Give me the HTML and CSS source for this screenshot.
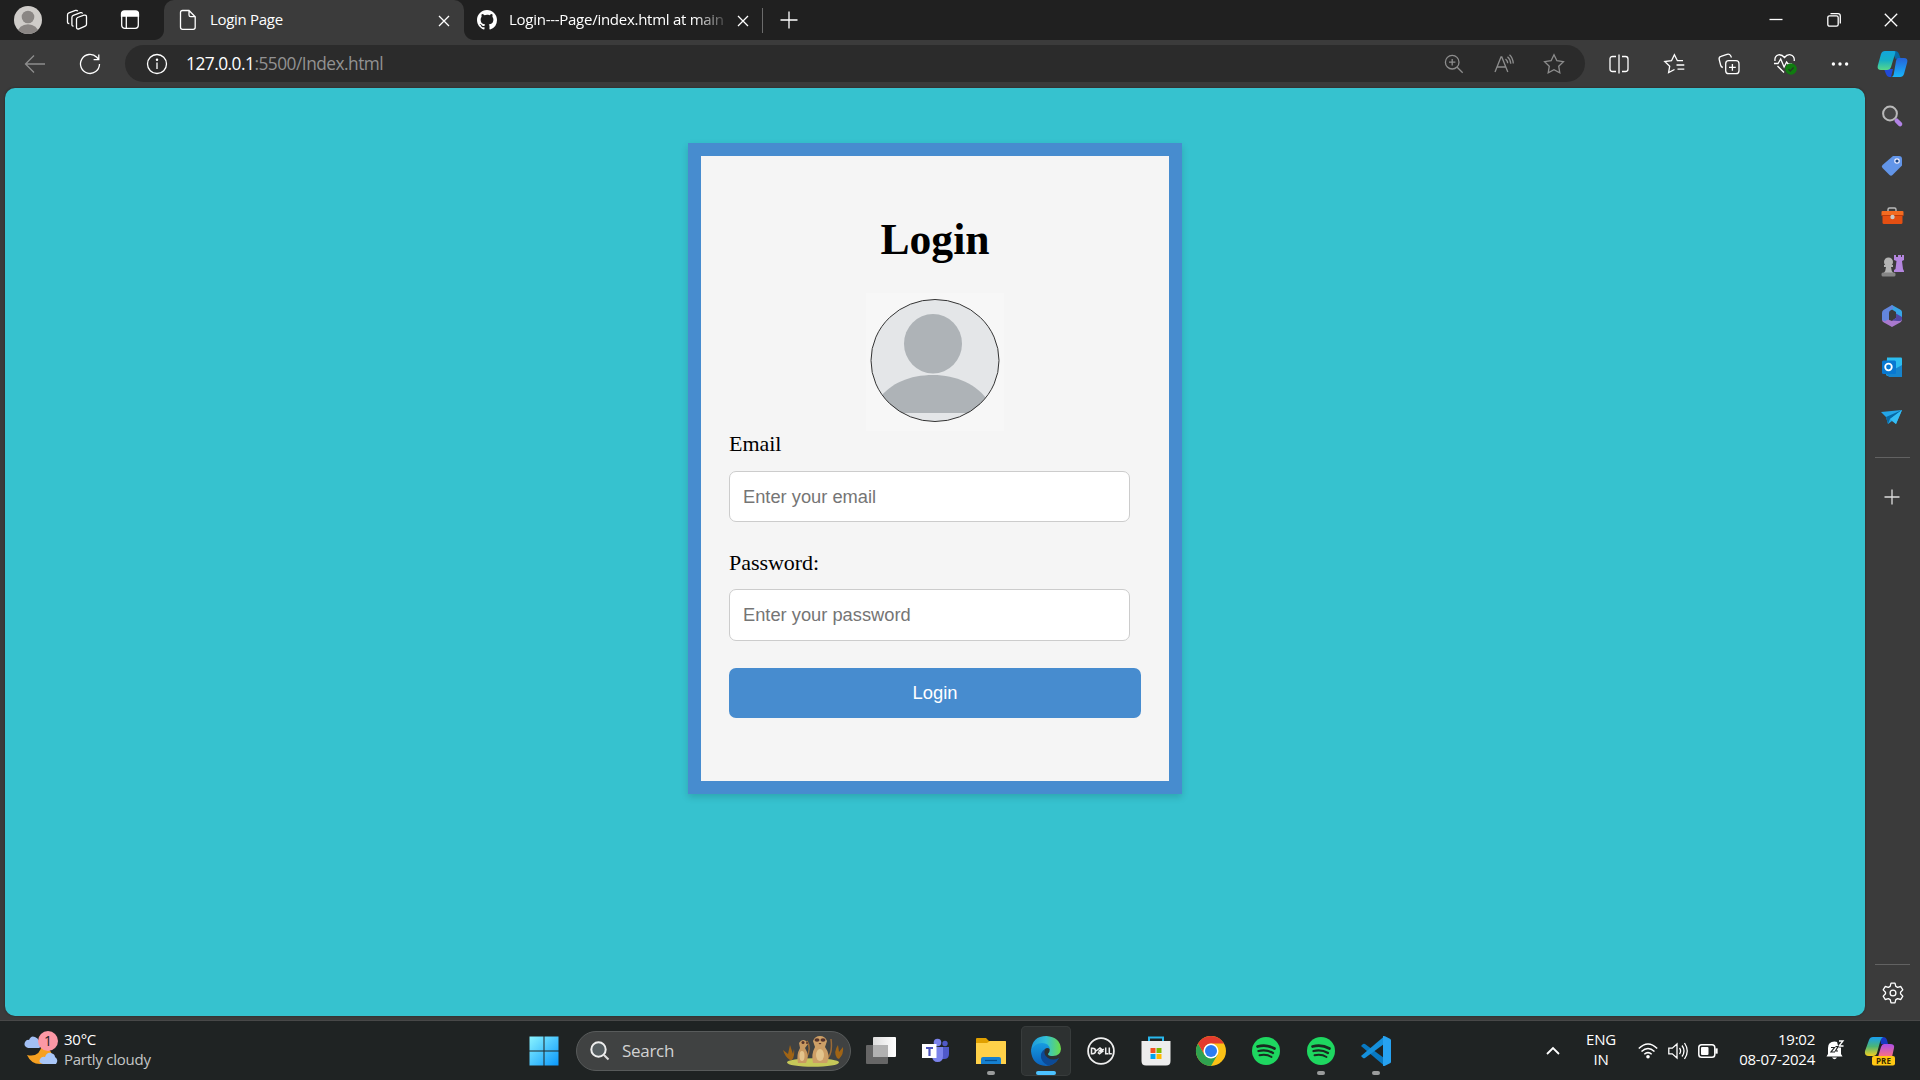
FILE: index.html
```html
<!DOCTYPE html>
<html lang="en">
<head>
<meta charset="utf-8">
<title>Login Page</title>
<link rel="stylesheet" href="styles.css">
</head>
<body>
<header class="titlebar">
  <div class="title-tools">
    <svg width="28" height="28" viewBox="0 0 28 28"><defs><clipPath id="av"><circle cx="14" cy="14" r="14"/></clipPath></defs><g clip-path="url(#av)"><rect width="28" height="28" fill="#cfccc9"/><circle cx="14" cy="11" r="6.3" fill="#8a8684"/><ellipse cx="14" cy="27" rx="10.5" ry="8.8" fill="#8a8684"/></g></svg>
    <svg class="line" width="22" height="22" viewBox="0 0 22 22"><path d="M11.5 8.5 18 6.2q2.500-.5 2.500 1.600v7.400q0 1.400-1.300 1.900l-6.200 2.700q-2.500.8-2.500-1.600V10.500q0-1.500 1-2zM7.500 17q-1.600.4-1.600-1.500V8.500q0-1.700 1.400-2.200L14.500 3.700q1.700-.4 2 1M3.300 14.500q-1.800.2-1.800-1.600V6q0-1.700 1.400-2.200L9.500 1.400q1.700-.4 2.200.9"/></svg>
    <svg class="line" width="20" height="20" viewBox="0 0 20 20"><rect x="1.700" y="1.700" width="16.600" height="16.600" rx="3"/><path d="M1.500 6V4q0-3 3-3h11q3 0 3 3v2z" fill="#fff"/><path d="M6.300 6v12"/></svg>
  </div>
  <div class="tab tab-active">
    <svg class="line" width="18" height="22" viewBox="0 0 18 22"><path d="M3.500 1.500H10L16.200 7.700V18.300q0 2-2 2H3.500q-2 0-2-2V3.500q0-2 2-2zM10 1.500V6q0 1.700 1.700 1.700h4.500"/></svg>
    <span class="tab-title">Login Page</span>
    <svg class="line" width="12" height="12" viewBox="0 0 12 12"><path d="m1 1 10 10M11 1 1 11"/></svg>
  </div>
  <div class="tab">
    <svg width="20" height="20" viewBox="0 0 16 16"><path fill="#fff" d="M8 0C3.580 0 0 3.580 0 8c0 3.540 2.290 6.530 5.470 7.590.4.070.55-.17.55-.38 0-.19-.01-.82-.01-1.490-2.010.37-2.530-.49-2.690-.94-.09-.23-.48-.94-.82-1.130-.28-.15-.68-.52-.01-.53.63-.01 1.080.58 1.230.82.72 1.210 1.870.87 2.330.66.070-.52.28-.87.51-1.070-1.780-.2-3.640-.89-3.640-3.950 0-.87.31-1.590.82-2.150-.08-.2-.36-1.020.08-2.120 0 0 .67-.21 2.200.82A7.600 7.600 0 0 1 8 3.860c.68 0 1.360.09 2 .27 1.530-1.040 2.200-.82 2.200-.82.44 1.100.16 1.920.08 2.120.51.56.82 1.270.82 2.150 0 3.070-1.870 3.750-3.650 3.950.29.25.54.73.54 1.480 0 1.070-.01 1.930-.01 2.200 0 .21.15.46.55.38A8.010 8.010 0 0 0 16 8c0-4.420-3.580-8-8-8z"/></svg>
    <span class="tab-title tab-faded">Login---Page/index.html at main</span>
    <svg class="line" width="12" height="12" viewBox="0 0 12 12"><path d="m1 1 10 10M11 1 1 11"/></svg>
  </div>
  <div class="tab-separator"></div>
  <svg class="line new-tab" width="18" height="18" viewBox="0 0 18 18"><path d="M9 .5v17M.5 9h17"/></svg>
  <div class="window-buttons">
    <svg class="line" width="14" height="14" viewBox="0 0 14 14"><path d="M.5 6.500h13"/></svg>
    <svg class="line" width="14" height="14" viewBox="0 0 14 14"><rect x=".8" y="2.800" width="10.400" height="10.400" rx="1.800"/><path d="M3.500.7H11q2.300 0 2.300 2.300v7.500"/></svg>
    <svg class="line" width="14" height="14" viewBox="0 0 14 14"><path d="m.8.8 12.400 12.400M13.200.8.8 13.200"/></svg>
  </div>
</header>

<div class="toolbar">
  <div class="nav-buttons">
    <svg class="line muted" width="22" height="20" viewBox="0 0 22 20"><path d="M21 10H1.500M10 1.500 1.500 10l8.500 8.500"/></svg>
    <svg class="line" width="22" height="22" viewBox="0 0 22 22"><path d="M20.500 11A9.500 9.500 0 1 1 17.800 4.300L19.700 6.500M19.800 1.500v5.200h-5.200"/></svg>
  </div>
  <div class="address">
    <svg class="line" width="22" height="22" viewBox="0 0 22 22"><circle cx="11" cy="11" r="9.500"/><path d="M11 9.500V16"/><circle cx="11" cy="6.700" r=".6" fill="#fff"/></svg>
    <span class="url"><b>127.0.0.1</b>:5500/Index.html</span>
    <div class="address-actions">
      <svg class="line muted" width="20" height="20" viewBox="0 0 20 20"><circle cx="8.200" cy="8.200" r="6.800"/><path d="m13.200 13.200 5.500 5.500M8.200 5v6.400M5 8.200h6.400"/></svg>
      <svg class="line muted" width="20" height="20" viewBox="0 0 20 20"><path d="m1 18 6-15h.8l6 15M3 13h8.800M11.500 5q2 1.600 2.200 4.300M13.500 2.800q3 2.600 3.300 7M15.500.8q3.300 3 3.800 8.700"/></svg>
      <svg class="line muted" width="22" height="22" viewBox="0 0 22 22"><path d="m11 1.700 2.900 6 6.500.9-4.700 4.600 1.100 6.600L11 16.700l-5.800 3.100 1.100-6.600L1.600 8.600l6.500-.9z"/></svg>
    </div>
  </div>
  <div class="browser-actions">
    <svg class="line" width="20" height="20" viewBox="0 0 20 20"><path d="M7 2.500H3.500q-2.500 0-2.500 2.500v10q0 2.500 2.500 2.500H7M13 2.500h3.500q2.500 0 2.500 2.500v10q0 2.500-2.500 2.500H13M10 .5v19"/></svg>
    <svg class="line" width="22" height="22" viewBox="0 0 22 22"><path d="M20 7.700h-5.600l-3-6-2.900 6L1.800 8.500l4.900 4.700-1.100 6.400 5.900-3.100M13.500 12h7.800M14.500 16.200h6.800"/></svg>
    <svg class="line" width="22" height="22" viewBox="0 0 22 22"><rect x="7.700" y="7.700" width="13.300" height="13" rx="3"/><path d="M14.400 11v6.800M11 14.400h6.800M4.800 14.500Q3 14 2.600 12L1.200 6.500q-.6-2.500 1.800-3.200L9 1.300q2.500-.7 3.500 1.200l1 2"/></svg>
    <svg class="line heart" width="24" height="22" viewBox="0 0 24 22"><path d="M2 8Q1.300 3 5.500 1.800 9 1.300 11.500 4.500 14 1.200 17.500 1.800q4.400 1.200 3.700 6.200M4.500 13l6.500 6.500M1 10.500h4L7.700 6l3.400 8 2.500-5 1.500 2h4"/><circle cx="18" cy="16" r="5.800" fill="#107c10" stroke="none"/><path d="m15.500 16.300 1.800 1.700 3.300-3.500" stroke="#253b25"/></svg>
    <svg width="18" height="6" viewBox="0 0 18 6"><g fill="#fff"><circle cx="2.400" cy="3" r="1.700"/><circle cx="9" cy="3" r="1.700"/><circle cx="15.600" cy="3" r="1.700"/></g></svg>
    <svg width="31" height="28" viewBox="0 0 31 28"><defs><linearGradient id="cp1" x1="0" y1="0" x2="0" y2="1"><stop offset="0" stop-color="#12a5dd"/><stop offset=".5" stop-color="#17afc4"/><stop offset="1" stop-color="#58d889"/></linearGradient><linearGradient id="cp2" x1="0" y1="0" x2="0" y2="1"><stop offset="0" stop-color="#2563d9"/><stop offset="1" stop-color="#18b5fa"/></linearGradient></defs><path d="M15 1h3q3 0 4 3l1.500 4-5 1z" fill="#0869a5"/><path d="M7 19h9l-2 8h-2q-2 0-3-3z" fill="#214ad8"/><path d="M8 1h9q2 0 1.300 2L14 17q-1 3-4 3H4q-4 0-3.300-4L4 4q1-3 4-3z" fill="url(#cp1)"/><path d="M21 8h6q4 0 3.300 4L27 24q-1 3-4 3h-9q2 0 2.600-2L19 11q.5-3 2-3z" fill="url(#cp2)"/></svg>
  </div>
</div>

<div class="workspace">
  <main class="page">
    <form class="card">
      <h1 class="card-title">Login</h1>
      <svg class="portrait" width="138" height="138" viewBox="0 0 138 138"><defs><clipPath id="pt"><ellipse cx="69" cy="67.500" rx="64" ry="61"/></clipPath></defs><rect width="138" height="138" fill="#f7f7f7"/><g clip-path="url(#pt)"><rect width="138" height="138" fill="#e4e6e8"/><ellipse cx="67" cy="50.700" rx="29" ry="29.800" fill="#aeb3b7"/><path d="M12 120V107C24 90 44 82 67 82s44 9 56 27v11z" fill="#aeb3b7"/></g><ellipse cx="69" cy="67.500" rx="64" ry="61" fill="none" stroke="#333"/></svg>
      <label class="field-label" for="email">Email</label>
      <input class="field" id="email" type="email" placeholder="Enter your email">
      <label class="field-label field-label-next" for="password">Password:</label>
      <input class="field field-password" id="password" type="password" placeholder="Enter your password">
      <button class="submit" type="button">Login</button>
    </form>
  </main>
  <aside class="sidebar">
    <svg width="22" height="22" viewBox="0 0 22 22"><circle cx="9" cy="8.500" r="6.900" fill="#454545" stroke="#b9b9b9" stroke-width="2"/><path d="m15.700 15.700 3.400 3.400" stroke="#b283e6" stroke-width="4.400" stroke-linecap="round"/></svg>
    <svg width="22" height="22" viewBox="0 0 22 22"><path d="M12 1h6q3 0 3 3v6.500L11.500 20q-1.500 1.500-3 0l-7-7q-1.500-1.500 0-3z" fill="#6295e8"/><circle cx="16" cy="6" r="2.200" fill="#174586" stroke="#eef" stroke-width="1.200"/></svg>
    <svg width="24" height="22" viewBox="0 0 24 22"><path d="M8 7V4.500Q8 3 9.500 3h5Q16 3 16 4.500V7" fill="none" stroke="#bbb" stroke-width="1.400"/><path d="M2.500 9h20v8.500q0 1.500-1.500 1.500H4q-1.500 0-1.500-1.500z" fill="#e44f12"/><path d="M2.500 6h20q1 0 1 1v3.500h-22V7q0-1 1-1z" fill="#f36b21"/><path d="M1.500 10.500h22" stroke="#bd3b09"/><circle cx="12.500" cy="12" r="2.200" fill="#c8cac9"/></svg>
    <svg width="24" height="24" viewBox="0 0 24 24"><path d="M14 1h2v2h2V1h3v2h1V1h2v5l-2 1 1 8 1 2v1H14v-2l1.500-1 1-8-2.500-1z" fill="#b486df"/><g fill="#b3b3b3"><circle cx="8.500" cy="8" r="4.500"/><path d="M4 11h9v2h-2q0 4 3 7H3q3-3 3-7H4z"/></g><rect x="1.500" y="18.500" width="14" height="4" rx="1.500" fill="#858585"/></svg>
    <svg width="22" height="24" viewBox="0 0 22 24"><path d="m11 1 8.500 4.800Q21 6.500 21 8v7l-6-4.500V8L11 5.500 6 8z" fill="#37a5e7"/><path d="M11 1 2.500 6Q1 7 1 9v7l3 2.500 4-2.500V9q0-2 2-3.200L13 4z" fill="#6386dd"/><path d="M1 16q0 1.500 1.500 2.300L11 23l8.500-4.800Q21 17.200 21 15l-6-1-4 3-4-1.500-3 1.800z" fill="#a979ce"/><path d="m15 9.500 6 3.500v2.500q-1 2-4 1.500l-6-.5 4-2.500z" fill="#5146a0"/></svg>
    <svg width="22" height="22" viewBox="0 0 22 22"><path d="M6 1.500h14q1 0 1 1V20H7q-2 0-2-2z" fill="#2bbdf0"/><path d="M21 9v12H8l-3-3z" fill="#1684cd"/><rect x="1" y="4.500" width="14" height="13.500" rx="1.500" fill="#0878d1"/><circle cx="7.500" cy="11" r="3.300" fill="none" stroke="#fff" stroke-width="1.800"/></svg>
    <svg width="22" height="20" viewBox="0 0 22 20"><path d="M0 5 21 3l-6 14-4-3-4 3-2-7z" fill="#23a6e8"/><path d="m5 10 16-7L9 12l-2 5z" fill="#0868a3"/><path d="m9 12 12-9-6 14z" fill="#35bdf4"/></svg>
    <hr class="side-rule">
    <svg class="line side-add" width="16" height="16" viewBox="0 0 16 16"><path d="M8 .5v15M.5 8h15"/></svg>
    <div class="side-bottom">
      <hr class="side-rule">
      <svg class="line side-gear" width="22" height="22" viewBox="0 0 22 22"><path d="M9 1.200h4l.8 3.200 1.800 1 3.200-.9 2 3.400-2.300 2.300v1.600l2.300 2.300-2 3.400-3.200-.9-1.800 1-.8 3.200H9l-.8-3.200-1.800-1-3.200.9-2-3.400 2.300-2.300v-1.600L1.200 7.900l2-3.400 3.200.9 1.800-1z" stroke-linejoin="round"/><circle cx="11" cy="11" r="2.900"/></svg>
    </div>
  </aside>
</div>

<footer class="taskbar">
  <div class="weather">
    <svg width="36" height="40" viewBox="0 0 36 40"><path d="M19 15q9 5 10 11-1 9-12 9Q8 35 4 26q13 3 15-11z" fill="#f6a020"/><path d="M20 35q-5-1-3-5 2-3 5-2 2-5 6-4 4 1 4 4 4 3 1 7z" fill="#a9c7f8"/><path d="M5 19q-5-2-3-6 2-3 4-2 2-5 6-3 3 1 4 4 5 5 0 7z" fill="#a2bff4"/><circle cx="25" cy="12" r="10" fill="#fc98a5"/><text x="25" y="17" text-anchor="middle" class="badge-text">1</text></svg>
    <div class="two-lines"><span>30°C</span><span class="dim">Partly cloudy</span></div>
  </div>
  <svg class="start" width="30" height="30" viewBox="0 0 30 30"><defs><linearGradient id="win" gradientUnits="userSpaceOnUse" x1="0" y1="0" x2="30" y2="30"><stop stop-color="#8cf5ff"/><stop offset="1" stop-color="#0896fb"/></linearGradient></defs><path d="M.5.500h14v14H.5zM15.500.500h14v14h-14zM.5 15.500h14v14H.5zM15.500 15.500h14v14h-14z" fill="url(#win)"/></svg>
  <div class="search">
    <svg width="20" height="20" viewBox="0 0 20 20"><circle cx="8.500" cy="8.500" r="7.200" fill="#555d60" stroke="#eee" stroke-width="2"/><path d="m13.700 13.700 4.800 4.800" stroke="#ddd" stroke-width="2"/></svg>
    <span class="search-text">Search</span>
    <svg width="62" height="34" viewBox="0 0 62 34"><ellipse cx="31" cy="28.500" rx="26" ry="4.300" fill="#c6c859"/><path d="M8 26Q3 23 1 16l5 4 2-9 3 9 1-5q1 7-2 11zM55 24q-4-6 1-13l1 7 4-5q1 7-4 12z" fill="#a06415"/><path d="M24 24q6-9 1-17M44 25q7-4 5-20" fill="none" stroke="#9a6b38" stroke-width="1.500"/><path d="M16 29q-2-8 2-15l-1-5q3-5 7-2l2 3-3 4q5 8 1 15z" fill="#c99a61"/><path d="M31 29q-2-9 2-16l-2-6q2-5 7-5t7 5l-2 6q6 8 2 16z" fill="#cd9f66"/><ellipse cx="38" cy="21" rx="4" ry="6" fill="#e3c48c"/><ellipse cx="20" cy="22" rx="2.500" ry="5" fill="#e3c48c"/><g fill="#57342b"><ellipse cx="35" cy="6" rx="2.500" ry="1.700"/><ellipse cx="41" cy="6" rx="2.500" ry="1.700"/><circle cx="21" cy="8.500" r="1.500"/><circle cx="25" cy="9" r="1"/><path d="m36.500 9 3 0-1.500 1.500z"/></g></svg>
  </div>
  <nav class="apps">
    <div class="app"><svg width="30" height="30" viewBox="0 0 30 30"><defs><linearGradient id="tv"><stop stop-color="#ddd"/><stop offset="1" stop-color="#fff"/></linearGradient></defs><rect y="9" width="22" height="19" rx="1" fill="#666"/><rect x="7" y="1" width="23" height="20" rx="1" fill="url(#tv)"/><path d="M7 9h15v12H7z" fill="#b1b1b1"/></svg></div>
    <div class="app"><svg width="28" height="26" viewBox="0 0 28 26"><circle cx="15.500" cy="4.500" r="3.800" fill="#7b83eb"/><circle cx="23" cy="5.500" r="2.700" fill="#5059c9"/><path d="M16 9h11v7q0 5-5 5h-5z" fill="#5059c9"/><path d="M10 9h11v9q0 6-5.500 6-5 0-5.500-6z" fill="#7b83eb"/><path d="M0 6h14.500v14H0z" fill="#fff"/><path d="M4 9h7v2H8.600v7H6.400v-7H4z" fill="#4b53bc"/></svg></div>
    <div class="app running"><svg width="30" height="28" viewBox="0 0 30 28"><path d="M0 2q0-1 1-1h9l3 3h16q1 0 1 1v5H0z" fill="#e0a000"/><path d="M0 6h11l3-2h15q1 0 1 1v22H0z" fill="#ffd149"/><path d="M5 27v-5q0-2 2-2h16q2 0 2 2v5z" fill="#1680d0"/><path d="M9 23.500h12" stroke="#064d8b" stroke-width="1.200"/></svg></div>
    <div class="app active"><svg width="30" height="30" viewBox="0 0 30 30"><defs><linearGradient id="ed"><stop stop-color="#1d98dc"/><stop offset=".5" stop-color="#32c0d8"/><stop offset="1" stop-color="#6cdd45"/></linearGradient><linearGradient id="ed2" x1="0" y1="0" x2="0" y2="1"><stop stop-color="#169be0"/><stop offset="1" stop-color="#0b62bd"/></linearGradient></defs><path d="M0 15Q1 0 15.500 0 29 1 30 13q-.5 7-8 7-5 0-5-2 4-5-1-8Q9 7 0 15z" fill="url(#ed)"/><path d="M0 15Q3 7 11 7q7 0 8 6-3-2-5 0-5 6 2 12 6 3 12-3-5 8-13 8Q1 29 0 15z" fill="url(#ed2)"/><path d="M14 13q-5 3-4 9 2 6 8 7.500 6-1 10-7.500-6 3-11 0t-3-9z" fill="#0c4a96"/></svg></div>
    <div class="app"><svg width="28" height="28" viewBox="0 0 28 28"><circle cx="14" cy="14" r="12.900" fill="none" stroke="#eee" stroke-width="1.800"/><g fill="none" stroke="#eee" stroke-width="1.500"><path d="M4.500 11.300h1q3 0 3 2.700t-3 2.700h-1zM18.700 10.500v6.200h2.500M22.300 10.500v6.200h2.500M9 14l4-3 1.500 1.200-3 2.300M10.800 15.300l1.700 1.400 4-3M13 15l3.800-3"/></g></svg></div>
    <div class="app"><svg width="30" height="30" viewBox="0 0 30 30"><path d="M8 6V1.500h14V6" fill="none" stroke="#28b8ed" stroke-width="2"/><path d="M.5 5h29v20q0 4.500-4.500 4.500H5Q.5 29.500.5 25z" fill="#ededed"/><path d="M9.500 12h5v5h-5z" fill="#f25022"/><path d="M15.500 12h5v5h-5z" fill="#7fba00"/><path d="M9.500 18h5v5h-5z" fill="#00a4ef"/><path d="M15.500 18h5v5h-5z" fill="#ffb900"/></svg></div>
    <div class="app"><svg width="30" height="30" viewBox="0 0 30 30"><circle cx="15" cy="15" r="15" fill="#fbc116"/><path d="M15 15 8.500 18.700 2 7.500A15 15 0 0 0 15 30l6.500-11.200z" fill="#2fa24f"/><path d="M2 7.500A15 15 0 0 1 28 7.500H15a7.500 7.500 0 0 0-6.500 11.200z" fill="#e33b2e"/><circle cx="15" cy="15" r="7.500" fill="#fff"/><circle cx="15" cy="15" r="6" fill="#2c7cf0"/></svg></div>
    <div class="app"><svg width="28" height="28" viewBox="0 0 28 28"><circle cx="14" cy="14" r="14" fill="#1ed760"/><g fill="none" stroke="#192a20" stroke-linecap="round"><path d="M5.500 9.500q9-2.500 17 2" stroke-width="2.700"/><path d="M6.500 14q8-2 14.500 2" stroke-width="2.300"/><path d="M7.500 18.300q7-1.500 12 1.700" stroke-width="1.900"/></g></svg></div>
    <div class="app running"><svg width="28" height="28" viewBox="0 0 28 28"><circle cx="14" cy="14" r="14" fill="#1ed760"/><g fill="none" stroke="#192a20" stroke-linecap="round"><path d="M5.500 9.500q9-2.500 17 2" stroke-width="2.700"/><path d="M6.500 14q8-2 14.500 2" stroke-width="2.300"/><path d="M7.500 18.300q7-1.500 12 1.700" stroke-width="1.900"/></g></svg></div>
    <div class="app running"><svg width="30" height="30" viewBox="0 0 30 30"><path d="m0 10 2-2q1-.7 2 0l19 14v7.500z" fill="#0879c2"/><path d="m0 20 2 2q1 .7 2 0L23 8V.5z" fill="#1590dc"/><path d="M22 0q1-.3 2 .3l5 2.500q1 .5 1 1.500v21.400q0 1-1 1.500l-5 2.500q-1 .5-2 0z" fill="#27a2f1"/></svg></div>
  </nav>
  <div class="tray">
    <svg class="line chevron" width="14" height="8" viewBox="0 0 14 8"><path d="m1 7 6-6 6 6" stroke-width="1.800"/></svg>
    <div class="two-lines language"><span>ENG</span><span>IN</span></div>
    <svg class="line" width="20" height="16" viewBox="0 0 20 16"><path d="M.8 5.500q9.200-9 18.400 0M3.500 8.500q6.500-6 13 0M6.300 11.300q3.700-3.300 7.400 0" stroke-width="1.500"/><circle cx="10" cy="13.700" r="1.800" fill="#fff" stroke="none"/></svg>
    <svg class="line" width="20" height="18" viewBox="0 0 20 18"><path d="M.8 6.200h3.500L9 2v14l-4.700-4.200H.8zM11.500 6q2.200 3 0 6M14 3.500q4 5.500 0 11M16.500 1q5.500 8 0 16"/></svg>
    <svg class="line" width="20" height="14" viewBox="0 0 20 14"><rect x=".8" y=".8" width="16" height="12.400" rx="2.800" stroke-width="1.500"/><rect x="3" y="3" width="7.500" height="8" rx="1" fill="#fff" stroke="none"/><path d="M18 5h1v4h-1z" fill="#fff"/></svg>
    <div class="two-lines clock"><span>19:02</span><span>08-07-2024</span></div>
    <svg class="bell" width="18" height="20" viewBox="0 0 18 20"><path d="M2 14V8q0-6.500 6.500-6.500T15 8v6l1.500 2.500H.5zM6 17.500h5q-2.500 3.500-5 0" fill="#fff"/><path d="M10.500 0H18v7.500h-5.500z" fill="#202424"/><path d="M13 1h4l-4 5h4.500" fill="none" stroke="#fff" stroke-width="1.300"/><path d="M5 7.500h3.500L5 12h4M9.500 6.500H12L9.500 11H12" fill="none" stroke="#202424" stroke-width="1.200"/></svg>
    <svg class="assistant" width="30" height="30" viewBox="0 0 30 30"><defs><linearGradient id="pa" x1="0" y1="0" x2="0" y2="1"><stop stop-color="#179ff1"/><stop offset=".5" stop-color="#4cb575"/><stop offset="1" stop-color="#f5cf20"/></linearGradient><linearGradient id="pb" x1="0" y1="0" x2="0" y2="1"><stop stop-color="#ac4ee8"/><stop offset="1" stop-color="#ff737c"/></linearGradient></defs><path d="M15 1h3q3 0 4 3l1 4h-7z" fill="#1838c1"/><path d="M8 1h10q-2 1-3 5l-3 11q-1 3-4 3H4q-5 0-4-5L4 4q1-3 4-3z" fill="url(#pa)"/><path d="M19 8h6q5 0 4 4l-2 9H13l3-10q1-3 3-3z" fill="url(#pb)"/><rect x="7" y="20" width="23" height="9.500" rx="2" fill="#ffc814"/><text x="18.500" y="27.700" text-anchor="middle" class="pre-text">PRE</text></svg>
  </div>
</footer>
</body>
</html>
```
FILE: styles.css
```css
* { box-sizing: border-box; }

body {
  margin: 0;
  width: 1920px;
  height: 1080px;
  overflow: hidden;
  display: flex;
  flex-direction: column;
  background: #3b3b3b;
  color: #fff;
  font: 15px/20px "Open Sans", "Noto Sans", sans-serif;
}

svg { display: block; flex: none; overflow: visible; }
.line { fill: none; stroke: #fff; stroke-width: 1.3; }
.muted { stroke: #8d8d8d; }

/* Window title bar */
.titlebar { display: flex; align-items: center; height: 40px; background: #202020; }
.title-tools { display: flex; align-items: center; gap: 24px; width: 164px; padding-left: 14px; }
.title-tools svg:nth-child(3) { margin-left: 8px; }
.tab { display: flex; align-items: center; width: 297px; height: 40px; padding: 0 12px 0 13px; }
.tab > .line:last-child { margin: 1px 0 0 auto; }
.tab-active { position: relative; width: 300px; padding: 0 14px 0 15px; background: #3b3b3b; border-radius: 10px 10px 0 0; }
.tab-active::before,
.tab-active::after { content: ""; position: absolute; bottom: 0; width: 10px; height: 10px; }
.tab-active::before { left: -10px; background: radial-gradient(circle at 0 0, #202020 9.5px, #3b3b3b 10.5px); }
.tab-active::after { right: -10px; background: radial-gradient(circle at 100% 0, #202020 9.5px, #3b3b3b 10.5px); }
.tab-title { margin-left: 12px; padding-bottom: 2px; font-size: 15px; letter-spacing: -.3px; white-space: nowrap; }
.tab-active .tab-title { margin-left: 13px; }
.tab-faded { width: 216px; overflow: hidden; letter-spacing: -.27px; -webkit-mask-image: linear-gradient(90deg, #000 185px, transparent 222px); mask-image: linear-gradient(90deg, #000 185px, transparent 222px); }
.tab-separator { width: 1px; height: 25px; margin-left: 1px; background: #6b6b6b; }
.new-tab { margin-left: 17px; }
.window-buttons { display: grid; grid-template-columns: repeat(3, 57.5px); justify-items: center; margin-left: auto; }

/* Address bar row */
.toolbar { display: flex; align-items: flex-start; height: 48px; padding-top: 5px; }
.nav-buttons { display: flex; align-items: center; gap: 33px; width: 125px; height: 37px; padding-left: 24px; }
.address { display: flex; align-items: center; width: 1460px; height: 37px; padding: 0 6px 0 21px; border-radius: 19px; background: #2b2b2b; }
.url { margin: 0 auto 0 18px; color: #929292; font-size: 17.3px; letter-spacing: -.5px; }
.url b { color: #fff; font-weight: 400; }
.address-actions { display: grid; grid-template-columns: repeat(3, 50px); place-items: center; }
.browser-actions { display: grid; grid-template-columns: repeat(5, 55.3px) 50px; place-items: center; height: 37px; margin-left: 6px; }

/* Page and browser sidebar */
.workspace { display: flex; height: 933px; padding: 0 0 4px 5px; border-bottom: 1px solid #484848; }
.page { width: 1860px; height: 928px; padding: 55px 0 0 683px; border-radius: 10px; background: #36c2cf; box-shadow: 0 0 2px #222; }
.sidebar { display: grid; grid-template-rows: repeat(7, 50.1px) 31px 48px 1fr; place-items: center; width: 54px; padding-top: 3px; }
.side-rule { width: 35px; height: 1px; margin: 0; border: 0; background: #626262; }
.side-add { stroke: #ddd; }
.side-bottom { align-self: end; height: 52px; }
.side-gear { margin: 17px 0 0 7px; }

.card { display: flex; flex-direction: column; width: 494px; height: 651px; padding: 58px 28px 0; border: 13px solid #478ccf; background: #f5f5f5; box-shadow: 0 3px 7px rgba(0, 0, 0, .15); color: #000; font: 22px/26px "Liberation Serif", serif; }
.card-title { margin: 0 0 29px; font-size: 43.6px; line-height: 50px; text-align: center; }
.portrait { align-self: center; }
.field-label { height: 26px; line-height: 25px; letter-spacing: -.05px; }
.field-label-next { margin-top: 28px; }
.field { width: 401px; height: 51px; margin-top: 14px; padding: 0 13px; border: 1px solid #ccc; border-radius: 7px; background: #fff; font: 18.3px "Liberation Sans", sans-serif; }
.field::placeholder { color: #757575; }
.field-password { height: 52px; margin-top: 13px; }
.submit { height: 50px; margin-top: 27px; padding: 0; border: 0; border-radius: 7px; background: #478ccf; color: #fff; font: 18.4px "Liberation Sans", sans-serif; }

/* Taskbar */
.taskbar { display: flex; align-items: center; height: 59px; background: #1f2323; }
.weather { display: flex; align-items: center; width: 529px; padding-left: 23px; gap: 5px; }
.weather svg { margin-top: -3px; }
.two-lines { display: flex; flex-direction: column; padding-bottom: 4px; font-size: 15px; line-height: 20px; letter-spacing: -.25px; }
.dim { color: #c4c6c6; }
.badge-text { font: 14px "Open Sans", sans-serif; fill: #222; }
.search { display: flex; align-items: center; width: 275px; height: 40px; margin-left: 17px; padding: 0 6px 0 13px; border: 1px solid #585b5b; border-radius: 20px; background: #404242; }
.search-text { margin: 0 auto 0 12px; color: #d2d2d2; font-size: 17px; letter-spacing: -.3px; }
.apps { display: grid; grid-template-columns: repeat(10, 50px); gap: 5px; margin-left: 5px; }
.app { display: grid; place-items: center; position: relative; height: 50px; border-radius: 5px; }
.active { background: #2d3131; box-shadow: inset 0 0 0 1px #383c3c; }
.running::after,
.active::after { content: ""; position: absolute; bottom: 1px; left: 21px; width: 8px; height: 4px; border-radius: 2px; background: #9a9c9c; }
.active::after { left: 15px; width: 20px; background: #4cc2ff; }
.tray { display: flex; align-items: center; gap: 10px; margin-left: 145px; }
.language { width: 40px; margin-left: 11px; margin-right: 7px; text-align: center; }
.clock { width: 87px; text-align: right; }
.bell { margin-left: 1px; margin-top: -1px; }
.assistant { margin-left: 11px; }
.pre-text { font: 700 8px "Open Sans", sans-serif; fill: #352900; }
```
